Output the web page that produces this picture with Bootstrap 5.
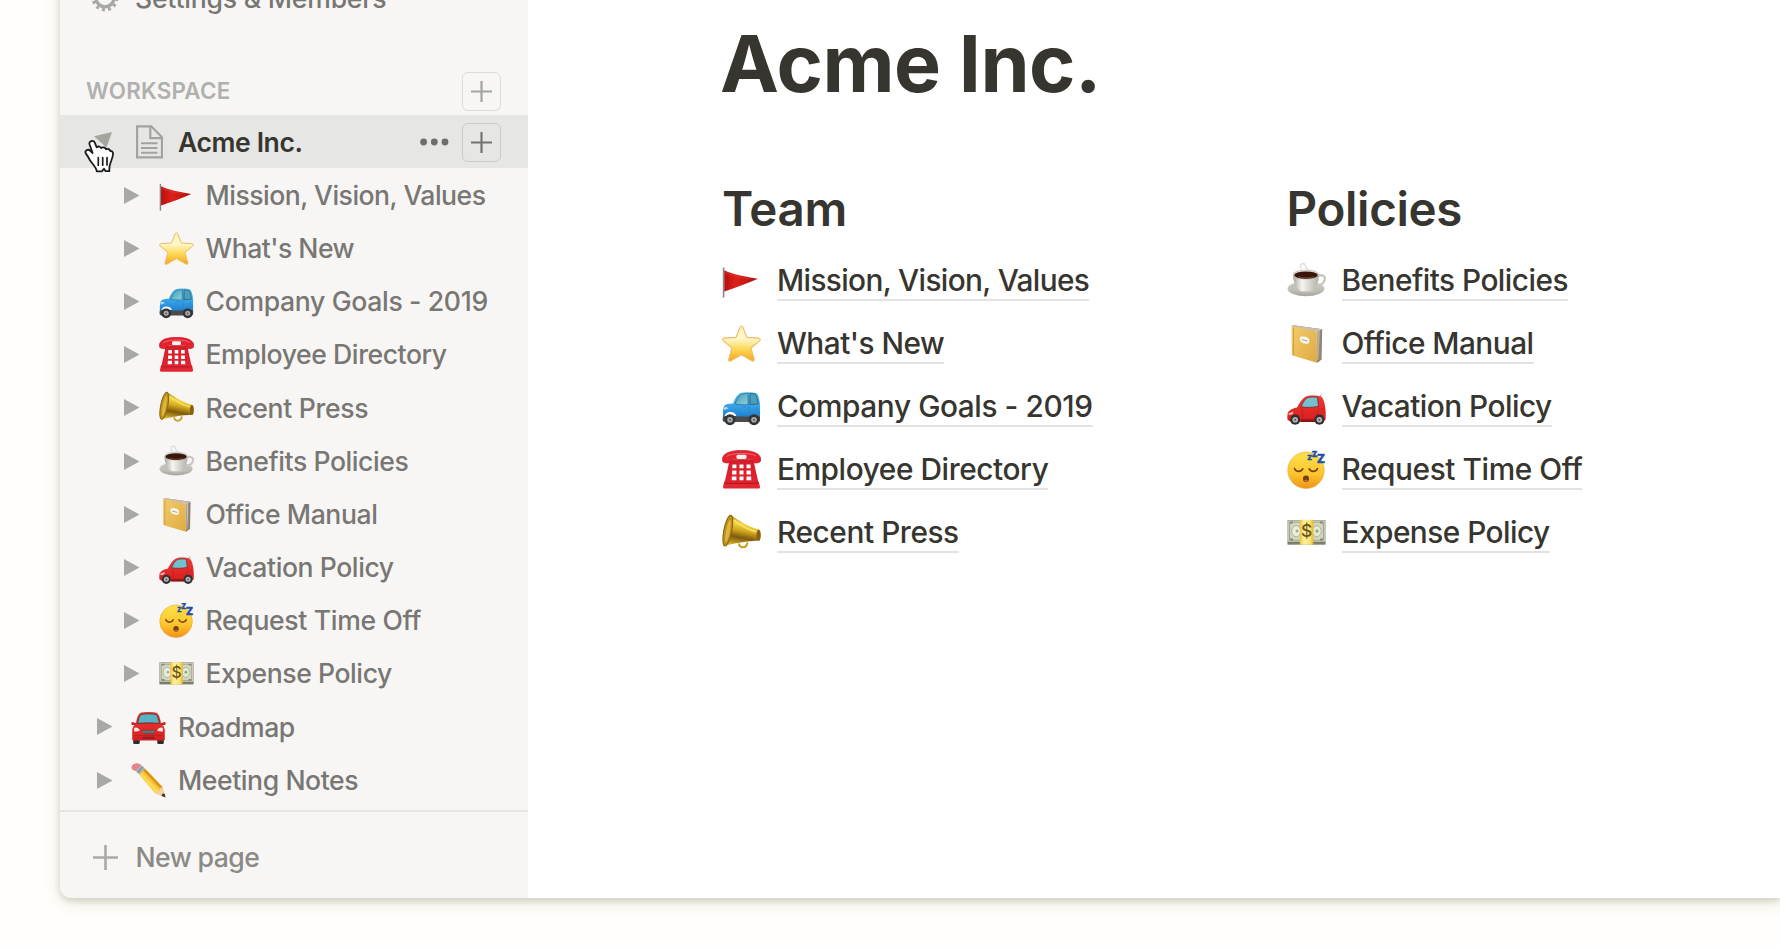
<!DOCTYPE html>
<html lang="en">
<head>
<meta charset="utf-8">
<title>Acme Inc.</title>
<meta name="viewport" content="width=device-width, initial-scale=1">
<link href="https://cdn.jsdelivr.net/npm/bootstrap@5.3.0/dist/css/bootstrap.min.css" rel="stylesheet">
<style>
body{background:#fffefb;font-family:Inter,"Liberation Sans",sans-serif;color:#37352f;height:948px;overflow:hidden}
.app-window{margin:-28.5px 0 0 60px;height:926.5px;background:#fff;border-bottom-left-radius:12px;box-shadow:0 3px 6px rgba(70,60,20,.18),0 4px 18px rgba(70,60,20,.12)}
.sidebar{width:468px;background:#f7f6f5;border-bottom-left-radius:12px;font-size:26.6px;font-weight:500;line-height:1;color:#787773;letter-spacing:-.43px}
.sidebar svg,.doc svg{flex:none;display:block}
.sidebar .tight{letter-spacing:-.52px}
.sidebar .wide{letter-spacing:-.34px}
.settings-row{height:53px;padding-left:31px;gap:16px;letter-spacing:-.22px}
.section-row{height:39px;margin-top:46.5px;padding:1px 27px 0 26px;font-size:22.4px;font-weight:600;color:#b0b0ad;letter-spacing:.22px}
.add-btn{width:39px;height:39px;border:1.5px solid #dcdbd9;border-radius:6px;color:#a3a3a0}
.page-row{height:53.18px;padding-left:36.5px}
.page-row.nested{padding-left:64px}
.page-row .arrow{width:15.5px;height:17px;margin-right:19px;fill:#a8a8a6}
.page-row .emo{width:35px;height:35px;margin-right:12px}
.page-row.current{height:53px;margin:5px 0 .6px;padding:1px 27px 0 34px;background:#e6e6e4;font-weight:600;color:#37352f}
.current .open-arrow{margin-right:22.5px}
.current .doc-icon{margin-right:15.5px}
.current .dots{margin-right:13.5px}
.current .add-btn{border-color:#cbcbc8;color:#73736f}
.new-page{margin-top:3px;border-top:2px solid #e6e5e3;padding:5px 0 0 32.5px;gap:18px;color:#8b8a87;letter-spacing:-.58px}
.doc{padding:51px 0 0 194px}
.doc h1{font-size:79px;font-weight:700;line-height:80px;margin:0 0 0 -2px;letter-spacing:-.55px}
.doc h2{font-size:47.5px;font-weight:600;line-height:58px;margin:0 0 11px;letter-spacing:-.35px}
.doc .cols{margin-top:77px}
.doc .cols>div{width:564.5px}
.doc-link{height:63px;gap:16px;font-size:29.8px;font-weight:500;letter-spacing:-.53px;color:#37352f;text-decoration:none}
.doc-link .tight{letter-spacing:-.65px}
.doc-link .wide{letter-spacing:-.42px}
.doc-link svg{width:39px;height:39px}
.doc-link span{line-height:38px;border-bottom:2px solid #e3e2e0;margin-top:2px;white-space:nowrap}
.hand{left:84px;top:138px;z-index:5}
</style>
</head>
<body>
<svg width="0" height="0" class="position-absolute" aria-hidden="true">
<defs>
<linearGradient id="gFlag" x1="0" x2="1"><stop offset="0" stop-color="#b5120f"/><stop offset=".35" stop-color="#dd2019"/><stop offset="1" stop-color="#a9120f"/></linearGradient>
<linearGradient id="gStar" x1="0" y1="0" x2="0" y2="1"><stop offset="0" stop-color="#fdf0b4"/><stop offset=".35" stop-color="#fff8cf"/><stop offset=".65" stop-color="#fdd95a"/><stop offset="1" stop-color="#f5a51d"/></linearGradient>
<linearGradient id="gBlue" x1="0" y1="0" x2="0" y2="1"><stop offset="0" stop-color="#56baf2"/><stop offset=".5" stop-color="#3aa6ea"/><stop offset="1" stop-color="#1f80cb"/></linearGradient>
<linearGradient id="gGlass" x1="0" y1="0" x2="1" y2="1"><stop offset="0" stop-color="#3f9bb0"/><stop offset="1" stop-color="#8fd2e0"/></linearGradient>
<linearGradient id="gRed" x1="0" y1="0" x2="0" y2="1"><stop offset="0" stop-color="#ef3a34"/><stop offset="1" stop-color="#d51e1e"/></linearGradient>
<linearGradient id="gPhone" x1="0" y1="0" x2="0" y2="1"><stop offset="0" stop-color="#d21f2c"/><stop offset="1" stop-color="#e2232f"/></linearGradient>
<linearGradient id="gHorn" x1=".6" y1="0" x2=".35" y2="1"><stop offset="0" stop-color="#8a6410"/><stop offset=".3" stop-color="#f3d63f"/><stop offset=".5" stop-color="#d3a81f"/><stop offset=".72" stop-color="#7d5a0c"/><stop offset="1" stop-color="#e0b82c"/></linearGradient>
<linearGradient id="gCup" x1="0" x2="1"><stop offset="0" stop-color="#aaa69f"/><stop offset=".35" stop-color="#f6f5f2"/><stop offset="1" stop-color="#b3afa8"/></linearGradient>
<linearGradient id="gSaucer" x1="0" y1="0" x2="0" y2="1"><stop offset="0" stop-color="#dedcd7"/><stop offset="1" stop-color="#aaa69f"/></linearGradient>
<linearGradient id="gBook" x1="0" y1="0" x2="1" y2="1"><stop offset="0" stop-color="#f1cc6a"/><stop offset="1" stop-color="#dfaa42"/></linearGradient>
<linearGradient id="gFace" x1="0" y1="0" x2="0" y2="1"><stop offset="0" stop-color="#fde14a"/><stop offset=".6" stop-color="#fcc52e"/><stop offset="1" stop-color="#ef9218"/></linearGradient>
<linearGradient id="gBand" x1="0" x2="1"><stop offset="0" stop-color="#eec22f"/><stop offset=".3" stop-color="#fdf0a0"/><stop offset=".75" stop-color="#fbe472"/><stop offset="1" stop-color="#e8b526"/></linearGradient>
</defs>
<symbol id="arrow" viewBox="0 0 15.5 17"><path d="M0 0L15.5 8.5L0 17Z"/></symbol>
<symbol id="plus" viewBox="0 0 25 25"><path d="M12.5 0V25M0 12.5H25" stroke="currentColor" stroke-width="2.6" fill="none"/></symbol>
<symbol id="flag" viewBox="0 0 39 39">
<path d="M1.6 6.5V36.5" stroke="#85898c" stroke-width="1.6"/><path d="M2.3 9.3C12 14 24 15.6 36 17.8C26 22.3 14 26.5 2.3 30.6Z" fill="url(#gFlag)"/><path d="M3 11.5C10 15 19 16 27 17.6" stroke="#e0392f" stroke-width=".8" fill="none"/>
</symbol>
<symbol id="star" viewBox="0 0 39 39">
<path d="M19.4 2C20.2 2 20.7 2.6 21 3.4L24.9 13.4L36.6 14.1C38.3 14.2 38.8 15.7 37.6 16.8L28.9 24L32.1 35.1C32.5 36.8 31.3 37.7 29.9 36.8L19.4 30.8L9 36.8C7.5 37.7 6.3 36.8 6.8 35.1L9.9 24L1.3 16.8C.1 15.7.6 14.2 2.2 14.1L14 13.4L17.9 3.4C18.2 2.6 18.6 2 19.4 2Z" fill="url(#gStar)" stroke="#eebb62" stroke-width="1.1"/>
</symbol>
<symbol id="bluecar" viewBox="0 0 39 39">
<path d="M1 29H38V33.5C38 34.5 37 35 36 35H3C1.5 35 .4 34 .6 32Z" fill="#4c4b4b"/>
<path d="M11 16.5C13 11 15.5 7.5 18 6.2C22 4.8 31 4.8 34.5 6.2C36.8 8 37.6 13 38 17.5V29.5H24C22 29.5 16.5 29.5 14.5 29.5C13.5 26 11.5 25 8 25C5 25 3 27 2.4 30L1 29.5C.8 24 1 20 3 18C5 16.7 8 16.7 11 16.5Z" fill="url(#gBlue)"/>
<path d="M13 17C14.8 12.2 17 8.5 19.3 7.3C21 6.6 24.5 6.4 26 6.5V17.5C22 18 17 17.8 13 17Z" fill="url(#gGlass)" stroke="#2b6c86" stroke-width=".7"/>
<path d="M28 6.5L33.2 7C34.8 8.5 35.7 13 36 17L28 17.5Z" fill="#4c9fb8" stroke="#285f78" stroke-width=".8"/>
<path d="M27 6V28M20 19.8H24M35 20V26" stroke="#2f85c4" stroke-width=".8"/><path d="M2 20.5C3.5 19.5 5.5 20 6.5 21.5L2 23Z" fill="#a9dcf6"/>
<circle cx="8" cy="32.7" r="5.5" fill="#343434"/><circle cx="8" cy="32.7" r="2.8" fill="#a9acae"/><circle cx="8" cy="32.7" r="1" fill="#555"/>
<circle cx="32" cy="32.7" r="5.5" fill="#343434"/><circle cx="32" cy="32.7" r="2.8" fill="#a9acae"/><circle cx="32" cy="32.7" r="1" fill="#555"/>
</symbol>
<symbol id="phone" viewBox="0 0 39 39">
<path d="M7.5 10H31.5C33 18 35 26 36.5 33H2.5C4 26 6 18 7.5 10Z" fill="url(#gPhone)"/>
<path d="M2.2 31.5H36.8L38 37C38 38 37.4 38.6 36.5 38.6H2.5C1.6 38.6 1 38 1 37Z" fill="#e02732"/><path d="M2.5 33.3H36.5" stroke="#a91320" stroke-width=".9"/>
<path d="M.4 9C.8 3 9 .4 19.5 .4C30 .4 38.2 3 38.8 9C39 12.3 37 13 33.5 13C30.5 13 29.6 12 29.4 9.5H9.6C9.4 12 8.5 13 5.5 13C2 13 .2 12.3 .4 9Z" fill="#e5212d" stroke="#b51422" stroke-width=".6"/>
<path d="M4.5 6.5C9 2.6 29 2.3 34 6" stroke="#ef6d73" stroke-width="1" fill="none"/>
<rect x="14.5" y="4.8" width="10" height="4.2" rx="1.4" fill="#fff1ef"/>
<g fill="#fff"><path d="M10.4 14.4h4v3.9h-4.1zM17.5 14.4h4v3.9h-4zM24.5 14.4h4l.2 3.9h-4.2zM10.2 20.5h4.2v3.9h-4.4zM17.5 20.5h4v3.9h-4zM24.5 20.5h4.3l.2 3.9h-4.5zM9.9 26.5h4.5v3.8h-4.7zM17.5 26.5h4v3.8h-4zM24.5 26.5h4.6l.2 3.8h-4.8z"/></g>
</symbol>
<symbol id="horn" viewBox="0 0 39 39">
<path d="M17 30.5C17 35.5 24.5 36 25.5 29.5" fill="none" stroke="#c99b24" stroke-width="2"/>
<path d="M9 2C16 7.5 27 14 37.3 16.8C39 18 39 26.5 37.3 27.6C25 28 12 30.5 2.2 33C-.8 29 2.5 6 9 2Z" fill="url(#gHorn)"/>
<ellipse cx="5.8" cy="17.6" rx="4" ry="15.6" transform="rotate(11 5.8 17.6)" fill="#bd9021" stroke="#8a630c" stroke-width="1"/>
<ellipse cx="6" cy="18" rx="1.9" ry="11.5" transform="rotate(11 6 18)" fill="#dcb63f"/>
<path d="M12 7C19 13 27 17 35 19" stroke="#f6e069" stroke-width="1.7" fill="none"/>
<ellipse cx="36.6" cy="22.2" rx="2.1" ry="5.6" fill="#8a620e"/>
</symbol>
<symbol id="coffee" viewBox="0 0 39 39">
<ellipse cx="19" cy="27.6" rx="18.5" ry="7.6" fill="url(#gSaucer)"/><ellipse cx="19" cy="26.6" rx="15.5" ry="5.3" fill="#c2bfb8"/>
<path d="M30 15C35.5 13 39 15.5 37.7 19C36.5 23 31.5 24.8 27.5 25" fill="none" stroke="#c9c6c0" stroke-width="2.4"/>
<path d="M6 14C6.3 22 10 29.5 15 30.3H23C28.5 29.5 31.7 22 32 14Z" fill="url(#gCup)"/>
<ellipse cx="19" cy="13.6" rx="13" ry="4.6" fill="#e0ded9" stroke="#aaa69e" stroke-width=".5"/><ellipse cx="19" cy="14.1" rx="11.9" ry="3.7" fill="#38170b"/><path d="M11 15.5C15 17.4 23 17.4 27 15.4" stroke="#744022" fill="none"/>
<path d="M14.5 8C12 5.5 14 2.5 16.5 2.5C19 2.7 17.5 5 19 6.5C20 7.6 19.5 8.5 21.5 9" fill="none" stroke="#d2d2d5" stroke-width="1.4" opacity=".75"/>
</symbol>
<symbol id="book" viewBox="0 0 39 39">
<path d="M5 1L35.2 5.2L34.6 35.5L30 39L27.5 9Z" fill="#8d816f"/>
<path d="M6 2.2L33 6L31.5 35.5L28.5 37V9Z" fill="#e2ded6"/><path d="M31 7V36.5M33 6V34.5" stroke="#978b79" stroke-width="1.2"/>
<path d="M5 1L35 5.2L34 6.3L28.5 7.5L5 3Z" fill="#c9bea9"/>
<path d="M4.6 2L28.5 7.5Q29.8 8 29.8 9.3L30 38.8L5.5 31.5Q4.8 31 4.8 30Z" fill="url(#gBook)"/>
<path d="M6.5 3.5V31" stroke="#c9983a" stroke-width=".8"/>
<path d="M13.3 12.4Q17 11 21 13.6Q22.8 14.8 22.6 17.5Q22.2 20.5 18.5 20Q12.7 18.7 12.6 15.5Q12.5 13.2 13.3 12.4Z" fill="#fff8eb" stroke="#d9b974" stroke-width=".5"/><path d="M14.8 15.5L20.5 17.2" stroke="#a9a9a7" stroke-width="1.3"/>
</symbol>
<symbol id="redcar" viewBox="0 0 39 39">
<path d="M32.5 10L34.5 7.5" stroke="#777" stroke-width=".8"/>
<path d="M10 20.5C13 14.5 16.5 9.8 20.5 8.9C25 8.1 31 8.3 34.5 9.7C36.7 12 37.6 16 38.3 20.5C39 25 38.8 30 38.5 33L34 34.8H4L.6 33C.2 31 .2 28 .8 26C2.5 22.5 6 21.3 10 20.5Z" fill="url(#gRed)"/>
<path d="M14 19.8C16 15 18.5 11 21.5 10.4C24 9.8 28.5 9.9 30.5 10.4L31.5 19.5C26 20.4 19 20.8 14 19.8Z" fill="#72c1cf" stroke="#8c252a" stroke-width=".9"/>
<path d="M15.5 21L16 33H28L32.5 21M34 22H37" stroke="#b81a1d" stroke-width=".6" fill="none"/>
<path d="M1.8 26.3L6.5 24.5L5.7 27.2L1.6 28Z" fill="#f7bdb6"/><path d="M14 32.5H28V35H13.5Z" fill="#8f1417"/>
<circle cx="8.2" cy="32.7" r="5.1" fill="#303030"/><circle cx="8.2" cy="32.7" r="2.8" fill="#b3b5b7"/><circle cx="8.2" cy="32.7" r="1" fill="#555"/>
<circle cx="32.4" cy="32.7" r="5.1" fill="#303030"/><circle cx="32.4" cy="32.7" r="2.8" fill="#b3b5b7"/><circle cx="32.4" cy="32.7" r="1" fill="#555"/>
</symbol>
<symbol id="sleepy" viewBox="0 0 39 39">
<circle cx="19" cy="20.3" r="18.2" fill="url(#gFace)" stroke="#eca229" stroke-width=".6"/>
<path d="M7.5 18.5C9 22.3 14 22.3 15.8 18.8M22.2 18.8C24 22.3 29 22.3 30.5 18.5" fill="none" stroke="#754012" stroke-width="1.6" stroke-linecap="round"/>
<ellipse cx="19" cy="28.8" rx="3" ry="3.3" fill="#754012"/><path d="M17 30.6Q19 28.9 21 30.6Q19 32.5 17 30.6" fill="#dd6d35"/>
<text fill="#1f50a8" stroke="#1f50a8" stroke-width=".4" font-family="Inter,'Liberation Sans',sans-serif" font-weight="700" font-size="9" x="20" y="9.8">z<tspan font-size="10.5" x="24.4" y="7.2">z</tspan><tspan font-size="15.5" x="29.6" y="12.8">z</tspan></text>
</symbol>
<symbol id="money" viewBox="0 0 39 39">
<path d="M.5 7H38.5V31.5H.5Z" fill="#8e8f7c"/><path d="M1.2 7.6H37.8V28.8H1.2Z" fill="#d3d6c0"/><path d="M.6 29.4H38.4M.6 31H38.4" stroke="#696b59" stroke-width=".7"/>
<rect x="2.6" y="9.2" width="33.8" height="18" fill="none" stroke="#a0a58c" stroke-width="1"/>
<ellipse cx="9.2" cy="18.2" rx="4.5" ry="5.6" fill="#eceddd" stroke="#a0a58c" stroke-width=".8"/><ellipse cx="29.8" cy="18.2" rx="4.5" ry="5.6" fill="#e3e8d4" stroke="#a0a58c" stroke-width=".8"/>
<circle cx="10" cy="18" r="1.5" fill="#a6aa96"/><circle cx="30" cy="18" r="1.5" fill="#7ba680"/>
<path d="M3 9.5h3M33 9.5h3M3 26.5h3M33 26.5h3" stroke="#858a72" stroke-width="2"/>
<path d="M12.8 6.8H26.4V31.8H12.8Z" fill="url(#gBand)"/>
<text x="19.6" y="24.4" text-anchor="middle" font-family="Inter,'Liberation Sans',sans-serif" font-weight="500" font-size="17.5" letter-spacing="0" fill="#6b541c">$</text>
</symbol>
<symbol id="frontcar" viewBox="0 0 40 40">
<path d="M2.5 31H10V38.5Q10 40 8.5 40H4Q2.5 40 2.5 38.5ZM30 31H37.5V38.5Q37.5 40 36 40H31.5Q30 40 30 38.5Z" fill="#2d2d2f"/>
<path d="M8 16.5L.8 14.8Q-.2 17.5 1.6 18.3L8 18.5ZM32 16.5L39.2 14.8Q40.2 17.5 38.4 18.3L32 18.5Z" fill="#c92020"/>
<path d="M5.5 17.5C6.5 11 8 6 10.5 4.6C14 3.2 26 3.2 29.5 4.6C32 6 33.5 11 34.5 17.5C37.5 19 38.6 22 38.6 25V34.5Q38.6 36 37 36H3Q1.4 36 1.4 34.5V25C1.4 22 2.5 19 5.5 17.5Z" fill="url(#gRed)"/>
<path d="M7.5 16.5C8.4 11 10 7 11.6 6.2C15 5.2 25 5.2 28.4 6.2C30 7 31.6 11 32.5 16.5C25 15.8 15 15.8 7.5 16.5Z" fill="#58b2c3" stroke="#6d2529" stroke-width="1.1"/>
<path d="M3.8 21.3Q8.5 20.8 10.2 24.7Q7 26.2 3.4 25.4ZM36.2 21.3Q31.5 20.8 29.8 24.7Q33 26.2 36.6 25.4Z" fill="#fde9e3"/>
<path d="M12.5 24H27.5L26 28.5H14Z" fill="#5c5254"/><path d="M13.5 26.2H26.5" stroke="#aaa" stroke-width=".7"/>
<path d="M4 30.3H36" stroke="#b81a1c" stroke-width=".8"/><rect x="13" y="31.8" width="14" height="2.6" rx="1.3" fill="#8d2123"/>
</symbol>
<symbol id="pencil" viewBox="0 0 40 40">
<path d="M9.5 13.2L15.8 6.4L36 27.5L39.3 39.2L27.6 34.5Z" fill="#f8c436"/>
<path d="M9.5 13.2L11.8 10.7L32.3 32L27.6 34.5Z" fill="#fbd84f"/><path d="M13.9 8.6L15.8 6.4L36 27.5L34.5 30Z" fill="#d9941d"/>
<path d="M27.6 34.5L30 31.8L33 31.3L33.4 28.8L36 27.5L39.3 39.2Z" fill="#efd2a0"/><path d="M36 35L38.2 34.8L39.5 39.4L34.7 37.5Z" fill="#363432"/>
<path d="M5.5 9.2L12 2.5L15.8 6.4L9.5 13.2Z" fill="#9daab4"/><path d="M7 11L13.6 4.3" stroke="#66747e" stroke-width=".8"/>
<path d="M5.5 9.2C2.5 8.4 -.2 6.8 .7 4.1C1.7 1.5 5 -.4 7.9 .5C9.8 .9 11 1.5 12 2.5Z" fill="#e9828b"/>
</symbol>
</svg>

<div class="app-window d-flex">
  <nav class="sidebar d-flex flex-column flex-shrink-0">
    <div class="settings-row d-flex align-items-center">
      <svg width="28" height="28" viewBox="0 0 28 28" fill="none" stroke="#a8a8a5"><circle cx="14" cy="14" r="8.9" stroke-width="3.4"/><circle cx="14" cy="14" r="11.6" stroke-width="3.6" stroke-dasharray="2.9 3.174"/></svg>
      <span>Settings &amp; Members</span>
    </div>
    <div class="section-row d-flex align-items-center justify-content-between">
      <span>WORKSPACE</span>
      <div class="add-btn d-flex align-items-center justify-content-center"><svg width="21" height="21"><use href="#plus"/></svg></div>
    </div>
    <div class="page-row current d-flex align-items-center">
      <svg class="open-arrow" width="18" height="20" viewBox="0 0 18 20"><path d="M0 4.2L18 0L12.5 15.5Z" fill="#a5a59e"/></svg>
      <svg class="doc-icon" width="28" height="34" viewBox="0 0 28 34" fill="none" stroke="#a3a39d" stroke-width="2.2"><path d="M2.1 1.3H16.3L27 12.2V32.3H2.1Z"/><path d="M15.3 1.3V13.2H27"/><path d="M6 18.3H22.5M6 23H22.5M6 27.7H22.5" stroke-width="1.9"/></svg>
      <span>Acme Inc.</span>
      <svg class="dots ms-auto" width="28.5" height="8" fill="#6d6d69"><circle cx="3.6" cy="4" r="3.4"/><circle cx="14.3" cy="4" r="3.4"/><circle cx="25" cy="4" r="3.4"/></svg>
      <div class="add-btn d-flex align-items-center justify-content-center"><svg width="21" height="21"><use href="#plus"/></svg></div>
    </div>
    <div class="page-row nested d-flex align-items-center"><svg class="arrow"><use href="#arrow"/></svg><svg class="emo"><use href="#flag"/></svg><span class="tight">Mission, Vision, Values</span></div>
    <div class="page-row nested d-flex align-items-center"><svg class="arrow"><use href="#arrow"/></svg><svg class="emo"><use href="#star"/></svg><span class="tight">What's New</span></div>
    <div class="page-row nested d-flex align-items-center"><svg class="arrow"><use href="#arrow"/></svg><svg class="emo"><use href="#bluecar"/></svg><span class="wide">Company Goals - 2019</span></div>
    <div class="page-row nested d-flex align-items-center"><svg class="arrow"><use href="#arrow"/></svg><svg class="emo"><use href="#phone"/></svg><span>Employee Directory</span></div>
    <div class="page-row nested d-flex align-items-center"><svg class="arrow"><use href="#arrow"/></svg><svg class="emo"><use href="#horn"/></svg><span class="wide">Recent Press</span></div>
    <div class="page-row nested d-flex align-items-center"><svg class="arrow"><use href="#arrow"/></svg><svg class="emo"><use href="#coffee"/></svg><span>Benefits Policies</span></div>
    <div class="page-row nested d-flex align-items-center"><svg class="arrow"><use href="#arrow"/></svg><svg class="emo"><use href="#book"/></svg><span>Office Manual</span></div>
    <div class="page-row nested d-flex align-items-center"><svg class="arrow"><use href="#arrow"/></svg><svg class="emo"><use href="#redcar"/></svg><span>Vacation Policy</span></div>
    <div class="page-row nested d-flex align-items-center"><svg class="arrow"><use href="#arrow"/></svg><svg class="emo"><use href="#sleepy"/></svg><span class="wide">Request Time Off</span></div>
    <div class="page-row nested d-flex align-items-center"><svg class="arrow"><use href="#arrow"/></svg><svg class="emo"><use href="#money"/></svg><span>Expense Policy</span></div>
    <div class="page-row d-flex align-items-center"><svg class="arrow"><use href="#arrow"/></svg><svg class="emo"><use href="#frontcar"/></svg><span>Roadmap</span></div>
    <div class="page-row d-flex align-items-center"><svg class="arrow"><use href="#arrow"/></svg><svg class="emo"><use href="#pencil"/></svg><span>Meeting Notes</span></div>
    <div class="new-page d-flex align-items-center flex-grow-1"><svg width="25" height="25" color="#aaa9a6"><use href="#plus"/></svg><span>New page</span></div>
  </nav>
  <main class="doc flex-grow-1">
    <h1>Acme Inc.</h1>
    <div class="cols d-flex">
      <div>
        <h2>Team</h2>
        <a class="doc-link d-flex align-items-center"><svg><use href="#flag"/></svg><span class="tight">Mission, Vision, Values</span></a>
        <a class="doc-link d-flex align-items-center"><svg><use href="#star"/></svg><span>What's New</span></a>
        <a class="doc-link d-flex align-items-center"><svg><use href="#bluecar"/></svg><span class="wide">Company Goals - 2019</span></a>
        <a class="doc-link d-flex align-items-center"><svg><use href="#phone"/></svg><span class="wide">Employee Directory</span></a>
        <a class="doc-link d-flex align-items-center"><svg><use href="#horn"/></svg><span class="wide">Recent Press</span></a>
      </div>
      <div>
        <h2>Policies</h2>
        <a class="doc-link d-flex align-items-center"><svg><use href="#coffee"/></svg><span>Benefits Policies</span></a>
        <a class="doc-link d-flex align-items-center"><svg><use href="#book"/></svg><span>Office Manual</span></a>
        <a class="doc-link d-flex align-items-center"><svg><use href="#redcar"/></svg><span>Vacation Policy</span></a>
        <a class="doc-link d-flex align-items-center"><svg><use href="#sleepy"/></svg><span class="wide">Request Time Off</span></a>
        <a class="doc-link d-flex align-items-center"><svg><use href="#money"/></svg><span>Expense Policy</span></a>
      </div>
    </div>
  </main>
</div>
<svg class="hand position-absolute" width="32" height="38" viewBox="0 0 32 38" aria-hidden="true">
<path d="M5.5 6.2C4.6 3.2 9.3 1.4 10.8 4.6L12.6 9.3C14.3 8 16.4 8.4 17.2 10C18.8 8.8 21.3 9.4 22 11.2C24 10.3 25.9 11.2 26.3 13C28.2 12.8 29.2 14.2 29 16.2C28.8 20.5 26 24.8 25.5 28.5L25.3 33.2H21.6L20 30.8L17.8 33.4H12.8C12.4 29 7.6 25 6 22.2C4.6 19.6 3.6 17.8 1.9 15.6C.2 12.8 3.8 10.4 6.3 12.8L8.6 15Z" fill="#fff" stroke="#1c1c1c" stroke-width="1.8" stroke-linejoin="round"/>
<path d="M14.3 19.6V27.2M18.7 19.6V27.2M23 19.6V27" stroke="#1c1c1c" stroke-width="1.7" stroke-linecap="round"/>
</svg>
<script src="https://cdn.jsdelivr.net/npm/bootstrap@5.3.0/dist/js/bootstrap.bundle.min.js"></script>
</body>
</html>
